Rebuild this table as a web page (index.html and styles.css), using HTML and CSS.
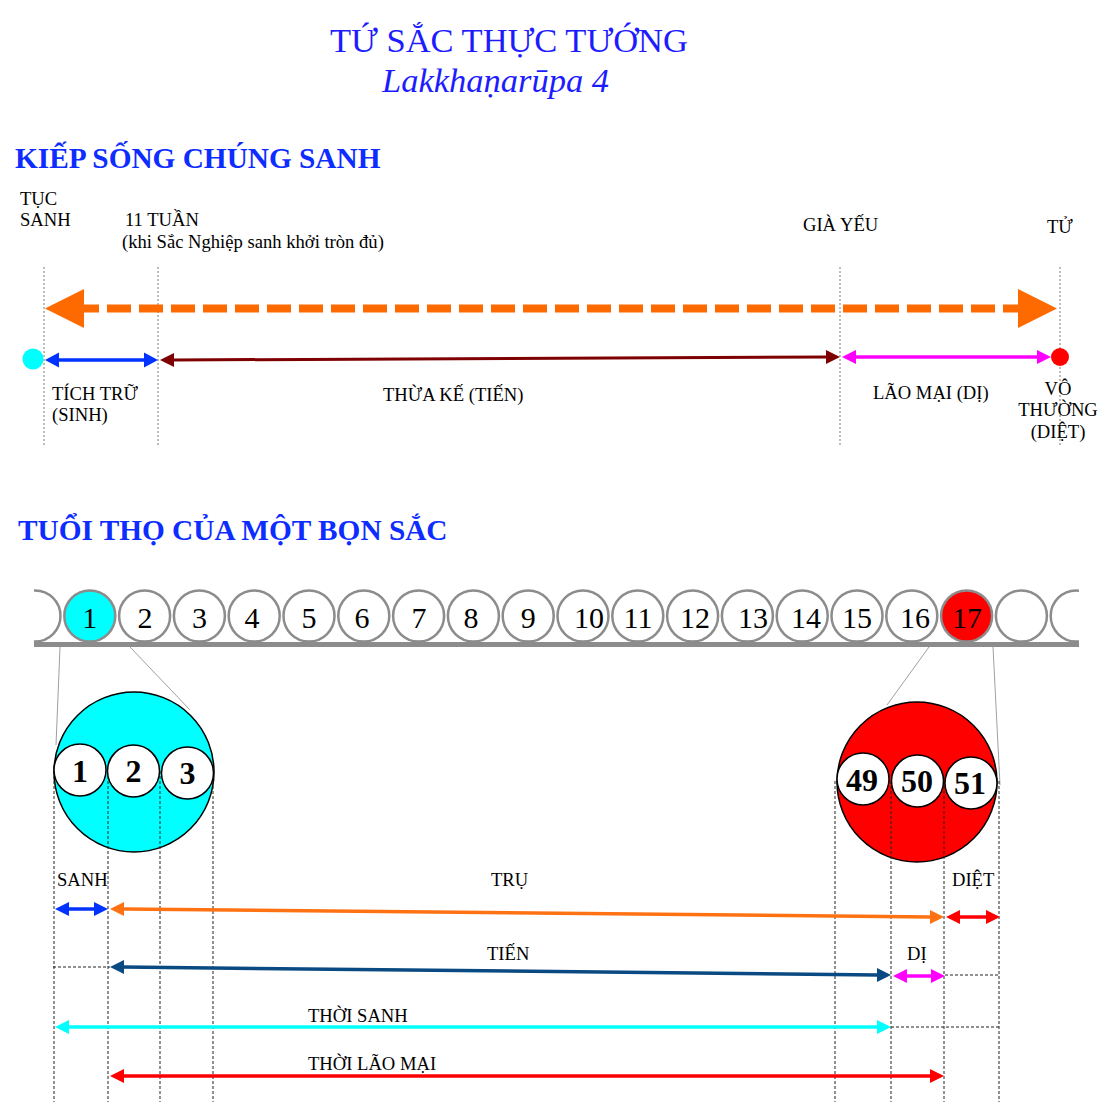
FILE: index.html
```html
<!DOCTYPE html>
<html lang="vi">
<head>
<meta charset="utf-8">
<title>Tứ Sắc Thực Tướng</title>
<link rel="stylesheet" href="styles.css">
</head>
<body>
<header class="title">
  <h1 class="title-main">TỨ SẮC THỰC TƯỚNG</h1>
  <p class="title-sub">Lakkhaṇarūpa 4</p>
</header>

<section class="sec">
  <h2 class="sec-head sec-head-1">KIẾP SỐNG CHÚNG SANH</h2>
  <svg class="diagram" viewBox="0 175 1105 285" width="1105" height="285" xmlns="http://www.w3.org/2000/svg">
    <text class="lbl" x="20" y="205">TỤC</text>
    <text class="lbl" x="20" y="226">SANH</text>
    <text class="lbl" x="125" y="226">11 TUẦN</text>
    <text class="lbl" x="122" y="248">(khi Sắc Nghiệp sanh khởi tròn đủ)</text>
    <text class="lbl" x="803" y="231">GIÀ YẾU</text>
    <text class="lbl" x="1047" y="233">TỬ</text>

    <line class="guide" x1="44" y1="267" x2="44" y2="447"/>
    <line class="guide" x1="158" y1="267" x2="158" y2="447"/>
    <line class="guide" x1="840" y1="267" x2="840" y2="447"/>
    <line class="guide" x1="1060" y1="267" x2="1060" y2="447"/>

    <line class="life-dash" x1="84" y1="308.5" x2="1018" y2="308.5"/>
    <polygon class="f-orange" points="45,308.5 84,289 84,328"/>
    <polygon class="f-orange" points="1057,308.5 1018,289 1018,328"/>

    <circle class="f-cyan" cx="33" cy="359" r="10.5"/>
    <circle class="f-red" cx="1060" cy="357" r="9"/>

    <line class="s-blue" x1="58" y1="360" x2="145" y2="360"/>
    <polygon class="f-blue" points="45,360 59,352.5 59,367.5"/>
    <polygon class="f-blue" points="158,360 144,352.5 144,367.5"/>

    <line class="s-maroon" x1="173" y1="360" x2="827" y2="357"/>
    <polygon class="f-maroon" points="160,360 174,353 174,367"/>
    <polygon class="f-maroon" points="840,357 826,350 826,364"/>

    <line class="s-magenta" x1="855" y1="357" x2="1038" y2="357"/>
    <polygon class="f-magenta" points="842,357 856,350 856,364"/>
    <polygon class="f-magenta" points="1051,357 1037,350 1037,364"/>

    <text class="lbl" x="52" y="400">TÍCH TRỮ</text>
    <text class="lbl" x="52" y="421">(SINH)</text>
    <text class="lbl" x="383" y="401">THỪA KẾ (TIẾN)</text>
    <text class="lbl" x="873" y="399">LÃO MẠI (DỊ)</text>
    <text class="lbl mid" x="1058" y="395">VÔ</text>
    <text class="lbl mid" x="1058" y="416">THƯỜNG</text>
    <text class="lbl mid" x="1058" y="438">(DIỆT)</text>
  </svg>
</section>

<section class="sec">
  <h2 class="sec-head sec-head-2">TUỔI THỌ CỦA MỘT BỌN SẮC</h2>
  <svg class="diagram" viewBox="0 547 1105 555" width="1105" height="555" xmlns="http://www.w3.org/2000/svg">
    <defs>
      <clipPath id="rowclip"><rect x="34" y="585" width="1045" height="65"/></clipPath>
    </defs>

    <g clip-path="url(#rowclip)">
      <circle class="cell" cx="35" cy="616" r="25.5"/>
      <circle class="cell cell-cyan" cx="89.8" cy="616" r="25.5"/>
      <circle class="cell" cx="144.6" cy="616" r="25.5"/>
      <circle class="cell" cx="199.4" cy="616" r="25.5"/>
      <circle class="cell" cx="254.2" cy="616" r="25.5"/>
      <circle class="cell" cx="309" cy="616" r="25.5"/>
      <circle class="cell" cx="363.8" cy="616" r="25.5"/>
      <circle class="cell" cx="418.6" cy="616" r="25.5"/>
      <circle class="cell" cx="473.4" cy="616" r="25.5"/>
      <circle class="cell" cx="528.2" cy="616" r="25.5"/>
      <circle class="cell" cx="583" cy="616" r="25.5"/>
      <circle class="cell" cx="637.8" cy="616" r="25.5"/>
      <circle class="cell" cx="692.6" cy="616" r="25.5"/>
      <circle class="cell" cx="747.4" cy="616" r="25.5"/>
      <circle class="cell" cx="802.2" cy="616" r="25.5"/>
      <circle class="cell" cx="857" cy="616" r="25.5"/>
      <circle class="cell" cx="911.8" cy="616" r="25.5"/>
      <circle class="cell cell-red" cx="966.6" cy="616" r="25.5"/>
      <circle class="cell" cx="1021.4" cy="616" r="25.5"/>
      <circle class="cell" cx="1076.2" cy="616" r="25.5"/>
      <line class="row-base" x1="34" y1="644.5" x2="1079" y2="644.5"/>
    </g>
    <text class="num" x="89.8" y="628">1</text>
    <text class="num" x="145" y="628">2</text>
    <text class="num" x="199.4" y="628">3</text>
    <text class="num" x="252" y="628">4</text>
    <text class="num" x="309" y="628">5</text>
    <text class="num" x="362" y="628">6</text>
    <text class="num" x="419" y="628">7</text>
    <text class="num" x="471" y="628">8</text>
    <text class="num" x="528.2" y="628">9</text>
    <text class="num" x="589" y="628">10</text>
    <text class="num" x="638" y="628">11</text>
    <text class="num" x="695" y="628">12</text>
    <text class="num" x="753" y="628">13</text>
    <text class="num" x="806" y="628">14</text>
    <text class="num" x="857" y="628">15</text>
    <text class="num" x="915" y="628">16</text>
    <text class="num" x="967" y="628">17</text>

    <line class="link" x1="60" y1="647" x2="56" y2="745"/>
    <line class="link" x1="130" y1="647" x2="190" y2="710"/>
    <line class="link" x1="929" y1="647" x2="887" y2="705"/>
    <line class="link" x1="993" y1="647" x2="1000" y2="785"/>

    <circle class="big big-cyan" cx="134" cy="772" r="80"/>
    <circle class="big big-red" cx="917" cy="782" r="80"/>

    <line class="vdash" x1="54" y1="771" x2="54" y2="1102"/>
    <line class="vdash" x1="108" y1="771" x2="108" y2="1102"/>
    <line class="vdash" x1="160" y1="771" x2="160" y2="1102"/>
    <line class="vdash" x1="213" y1="771" x2="213" y2="1102"/>
    <line class="vdash" x1="835" y1="781" x2="835" y2="1102"/>
    <line class="vdash" x1="891" y1="781" x2="891" y2="1102"/>
    <line class="vdash" x1="944" y1="781" x2="944" y2="1102"/>
    <line class="vdash" x1="999" y1="781" x2="999" y2="1102"/>
    <line class="vdash" x1="53" y1="967" x2="110" y2="967"/>
    <line class="vdash" x1="945" y1="975" x2="1000" y2="975"/>
    <line class="vdash" x1="891" y1="1027" x2="1000" y2="1027"/>

    <circle class="small" cx="80" cy="770" r="26"/>
    <circle class="small" cx="133.5" cy="771" r="26"/>
    <circle class="small" cx="187.5" cy="773" r="26"/>
    <text class="bnum" x="80" y="782">1</text>
    <text class="bnum" x="133.5" y="782">2</text>
    <text class="bnum" x="187.5" y="784">3</text>

    <circle class="small" cx="863" cy="779" r="26"/>
    <circle class="small" cx="917.5" cy="781" r="26"/>
    <circle class="small" cx="971" cy="783" r="26"/>
    <text class="bnum" x="862" y="791">49</text>
    <text class="bnum" x="917" y="792">50</text>
    <text class="bnum" x="970" y="794">51</text>

    <text class="lbl" x="57" y="886">SANH</text>
    <text class="lbl" x="491" y="886">TRỤ</text>
    <text class="lbl" x="952" y="886">DIỆT</text>
    <text class="lbl" x="487" y="960">TIẾN</text>
    <text class="lbl" x="907" y="960">DỊ</text>
    <text class="lbl" x="308" y="1022">THỜI SANH</text>
    <text class="lbl" x="308" y="1070">THỜI LÃO MẠI</text>

    <line class="s-blue" x1="68" y1="909" x2="95" y2="909"/>
    <polygon class="f-blue" points="55,909 69,902 69,916"/>
    <polygon class="f-blue" points="108,909 94,902 94,916"/>

    <line class="s-orange" x1="123" y1="909" x2="931" y2="917"/>
    <polygon class="f-orange2" points="110,909 124,902 124,916"/>
    <polygon class="f-orange2" points="944,917 930,910 930,924"/>

    <line class="s-red" x1="959" y1="917" x2="987" y2="917"/>
    <polygon class="f-red" points="946,917 960,910 960,924"/>
    <polygon class="f-red" points="1000,917 986,910 986,924"/>

    <line class="s-navy" x1="123" y1="967" x2="878" y2="975"/>
    <polygon class="f-navy" points="110,967 124,960 124,974"/>
    <polygon class="f-navy" points="891,975 877,968 877,982"/>

    <line class="s-magenta" x1="906" y1="976" x2="932" y2="976"/>
    <polygon class="f-magenta" points="893,976 907,969 907,983"/>
    <polygon class="f-magenta" points="945,976 931,969 931,983"/>

    <line class="s-cyan" x1="68" y1="1027" x2="878" y2="1027"/>
    <polygon class="f-cyan" points="55,1027 69,1020 69,1034"/>
    <polygon class="f-cyan" points="891,1027 877,1020 877,1034"/>

    <line class="s-red" x1="123" y1="1076" x2="931" y2="1076"/>
    <polygon class="f-red" points="110,1076 124,1069 124,1083"/>
    <polygon class="f-red" points="944,1076 930,1069 930,1083"/>
  </svg>
</section>
</body>
</html>
```

FILE: styles.css
```css
html, body {
  margin: 0;
  padding: 0;
  background: #ffffff;
  overflow: hidden;
}

body {
  width: 1105px;
  height: 1106px;
  font-family: "Liberation Serif", "Times New Roman", serif;
  color: #000;
}

.title {
  padding-top: 20px;
}

.title-main,
.title-sub {
  margin: 0;
  font-size: 34.5px;
  line-height: 40px;
  font-weight: normal;
  color: #1c1cff;
  white-space: nowrap;
}

.title-main {
  padding-left: 330px;
}

.title-sub {
  padding-left: 382px;
  font-style: italic;
}

.sec-head {
  margin: 41px 0 0;
  padding-left: 15px;
  font-size: 29.3px;
  line-height: 34px;
  font-weight: bold;
  color: #0d2cff;
  white-space: nowrap;
}

.sec-head-2 {
  margin-top: 53px;
  padding-left: 18px;
}

.diagram {
  display: block;
}

.lbl {
  font-family: "Liberation Serif", "Times New Roman", serif;
  font-size: 18.6px;
  fill: #000;
}

.mid {
  text-anchor: middle;
}

.guide {
  stroke: #7a7a7a;
  stroke-width: 1;
  stroke-dasharray: 2 2;
}

.life-dash {
  stroke: #ff6a00;
  stroke-width: 8;
  stroke-dasharray: 24 8;
  stroke-dashoffset: 9;
}

.f-orange { fill: #ff6a00; }
.f-orange2 { fill: #ff7214; }
.f-cyan { fill: #00ffff; }
.f-red { fill: #ff0000; }
.f-blue { fill: #0033ff; }
.f-maroon { fill: #7f0000; }
.f-magenta { fill: #ff00ff; }
.f-navy { fill: #0a4a82; }

.s-blue { stroke: #0033ff; stroke-width: 3.5; }
.s-maroon { stroke: #7f0000; stroke-width: 3; }
.s-magenta { stroke: #ff00ff; stroke-width: 3.5; }
.s-orange { stroke: #ff7214; stroke-width: 3.5; }
.s-red { stroke: #ff0000; stroke-width: 3.5; }
.s-navy { stroke: #0a4a82; stroke-width: 3.5; }
.s-cyan { stroke: #00ffff; stroke-width: 3.5; }

.cell {
  fill: #ffffff;
  stroke: #8c8c8c;
  stroke-width: 2.5;
}

.cell-cyan { fill: #00ffff; }
.cell-red { fill: #ff0000; }

.row-base {
  stroke: #8c8c8c;
  stroke-width: 5;
}

.num {
  font-family: "Liberation Serif", "Times New Roman", serif;
  font-size: 30px;
  text-anchor: middle;
  fill: #000;
}

.link {
  stroke: #a0a0a0;
  stroke-width: 1;
}

.big {
  stroke: #000;
  stroke-width: 1.5;
}

.big-cyan { fill: #00ffff; }
.big-red { fill: #ff0000; }

.small {
  fill: #ffffff;
  stroke: #000;
  stroke-width: 1.5;
}

.bnum {
  font-family: "Liberation Serif", "Times New Roman", serif;
  font-size: 32px;
  font-weight: bold;
  text-anchor: middle;
  fill: #000;
}

.vdash {
  stroke: #222;
  stroke-width: 1;
  stroke-dasharray: 3 2;
}
```
